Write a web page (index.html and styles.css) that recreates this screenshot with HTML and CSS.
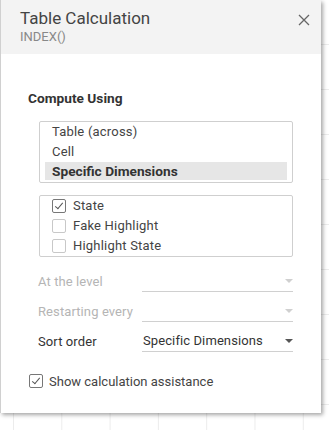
FILE: index.html
```html
<!DOCTYPE html>
<html lang="en">
<head>
    <meta charset="UTF-8">
    <title>Table Calculation</title>
    <link rel="stylesheet" href="styles.css">
</head>
<body>
    <div class="dialog">
        <header class="dialog-header">
            <div class="dialog-title">Table Calculation</div>
            <div class="dialog-subtitle">INDEX()</div>
            <button class="close-button" aria-label="Close">
                <svg width="12" height="12" viewBox="0 0 12 12">
                    <path d="M1 1 L11 11 M11 1 L1 11" stroke="#666" stroke-width="1.3" fill="none"/>
                </svg>
            </button>
        </header>

        <div class="dialog-body">
            <div class="section-title">Compute Using</div>

            <div class="listbox">
                <div class="list-item">Table (across)</div>
                <div class="list-item">Cell</div>
                <div class="list-item selected">Specific Dimensions</div>
            </div>

            <div class="listbox">
                <div class="list-item check-item"><span class="checkbox checked"></span>State</div>
                <div class="list-item check-item"><span class="checkbox"></span>Fake Highlight</div>
                <div class="list-item check-item"><span class="checkbox"></span>Highlight State</div>
            </div>

            <div class="form-rows">
                <div class="form-row disabled">
                    <div class="form-label">At the level</div>
                    <div class="dropdown"><span class="dropdown-value"></span><span class="arrow"></span></div>
                </div>
                <div class="form-row disabled">
                    <div class="form-label">Restarting every</div>
                    <div class="dropdown"><span class="dropdown-value"></span><span class="arrow"></span></div>
                </div>
                <div class="form-row">
                    <div class="form-label">Sort order</div>
                    <div class="dropdown"><span class="dropdown-value">Specific Dimensions</span><span class="arrow"></span></div>
                </div>
            </div>

            <div class="assist-row"><span class="checkbox checked"></span>Show calculation assistance</div>
        </div>
    </div>
</body>
</html>
```

FILE: styles.css
```css
body {
    font-family: Roboto, 'Liberation Sans', Arial, sans-serif;
    margin: 0;
    padding: 0;
    width: 329px;
    height: 430px;
    overflow: hidden;
    color: #333;
    background-color: white;
    background-image:
        linear-gradient(to right, #ececec 1px, transparent 1px),
        linear-gradient(to bottom, #ececec 1px, transparent 1px);
    background-size: 48.3px 100%, 100% 45px;
    background-position: 13px 0, 0 44px;
}
.dialog {
    width: 320px;
    height: 413px;
    background-color: white;
    border-left: 1px solid #d0d0d0;
    box-shadow: 2px 2px 4px rgba(0,0,0,0.35);
}
.dialog-header {
    position: relative;
    height: 54px;
    box-sizing: border-box;
    padding: 7px 0 0 19px;
    background-color: #f3f3f3;
}
.dialog-title {
    font-size: 17px;
    line-height: 22px;
    color: #444;
}
.dialog-subtitle {
    font-size: 13px;
    line-height: 16px;
    color: #888;
}
.close-button {
    position: absolute;
    top: 14px;
    right: 11px;
    width: 12px;
    height: 12px;
    padding: 0;
    border: none;
    background: none;
    display: flex;
}
.dialog-body {
    padding: 0 27px;
}
.section-title {
    margin-top: 36px;
    font-size: 13.7px;
    font-weight: bold;
    line-height: 17px;
}
.listbox {
    margin: 14px 0 0 11px;
    width: 254px;
    box-sizing: border-box;
    border: 1px solid #cfcfcf;
    border-radius: 2px;
    padding: 0 5px;
}
.listbox + .listbox {
    margin-top: 12px;
}
.list-item {
    height: 20px;
    line-height: 20px;
    padding-left: 7px;
    font-size: 13px;
    letter-spacing: 0.2px;
    color: #444;
}
.list-item.selected {
    height: 18px;
    line-height: 18px;
    margin-bottom: 2px;
    background-color: #e6e6e6;
    font-weight: bold;
    font-size: 13.7px;
    letter-spacing: 0;
    color: #333;
}
.check-item {
    display: flex;
    align-items: center;
    gap: 7px;
}
.checkbox {
    width: 14px;
    height: 14px;
    box-sizing: border-box;
    border: 1px solid #c8c8c8;
    border-radius: 2px;
    position: relative;
    flex-shrink: 0;
}
.checkbox.checked {
    border-color: #777;
}
.checkbox.checked::after {
    content: '';
    position: absolute;
    left: 4px;
    top: 1px;
    width: 3px;
    height: 7px;
    border: solid #555;
    border-width: 0 1.5px 1.5px 0;
    transform: rotate(40deg);
}
.form-rows {
    margin-top: 9px;
    padding-left: 10px;
}
.form-row {
    display: flex;
    align-items: center;
    height: 30px;
    font-size: 13px;
    letter-spacing: 0.1px;
}
.form-label {
    width: 104px;
    color: #333;
}
.dropdown {
    width: 151px;
    height: 22px;
    box-sizing: border-box;
    border-bottom: 1px solid #d0d0d0;
    display: flex;
    align-items: center;
    justify-content: space-between;
    padding-left: 1px;
}
.arrow {
    width: 0;
    height: 0;
    border-left: 4px solid transparent;
    border-right: 4px solid transparent;
    border-top: 4px solid #555;
}
.form-row.disabled .form-label {
    color: #b5b5b5;
}
.form-row.disabled .arrow {
    border-top-color: #d0d0d0;
}
.assist-row {
    margin-top: 15px;
    height: 20px;
    display: flex;
    align-items: center;
    gap: 6px;
    padding-left: 1px;
    font-size: 13px;
    color: #444;
}
```
